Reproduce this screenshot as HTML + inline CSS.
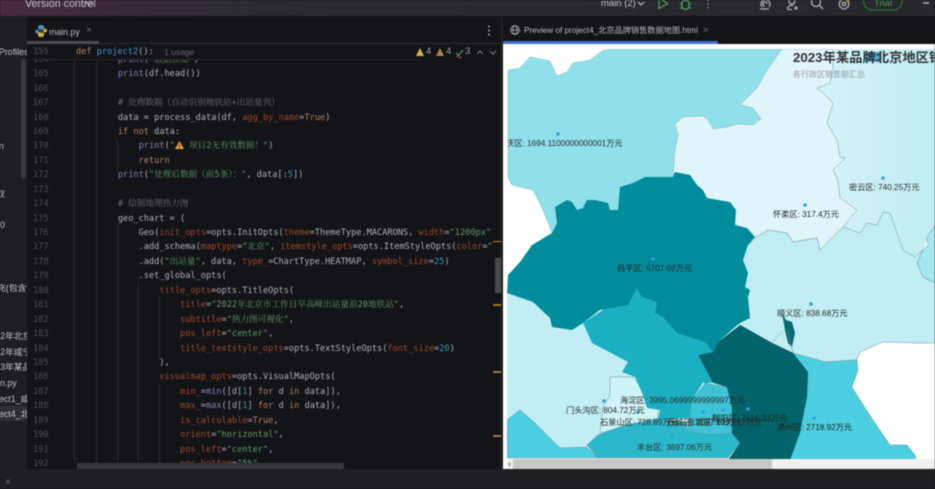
<!DOCTYPE html>
<html><head><meta charset="utf-8">
<style>
html,body{margin:0;padding:0;background:#131417;}
#w{position:relative;width:935px;height:489px;overflow:hidden;background:#131417;filter:blur(.4px);font-family:"Liberation Sans","Noto Sans CJK SC",sans-serif;}
.a{position:absolute;white-space:nowrap;}
pre{margin:0;font-family:"DejaVu Sans Mono","Noto Serif CJK SC",monospace;font-size:8.62px;line-height:14.44px;position:absolute;white-space:pre;}
.k{color:#b5805f}.s{color:#5f9a68}.p{color:#9c4a2b}.b{color:#7f83b8}.c{color:#6c7076}.n{color:#2a9aa6}.f{color:#4f8fd0}
#code{left:66px;top:52.8px;color:#aeb0b6;width:427px;height:411px;overflow:hidden;}
#nums{left:33px;top:52.8px;color:#4a4e55;}
.l{position:absolute;font-size:8.2px;color:#2a2a2a;line-height:12px;white-space:nowrap;}
.g{position:absolute;width:1px;background:#2a2c30;}
</style></head><body>
<div id="w">
<!-- top bar -->
<div class="a" style="left:0;top:0;width:935px;height:16px;background:linear-gradient(90deg,#4a2a40 0,#3a2a3a 90px,#2b2c31 260px,#26282c 100%);"></div>
<div class="a" style="left:25px;top:-2px;font-size:10.700px;color:#c4c4c8;line-height:12px;">Version control</div>
<div class="a" style="left:601px;top:-2px;font-size:9.500px;color:#c4c4c8;line-height:12px;">main (2)</div>
<svg class="a" style="left:0;top:0" width="660" height="16" fill="none" stroke="#c4c4c8" stroke-width="1.100"><path d="M86 2l3 3 3-3M638 2l3 3 3-3"/></svg>
<svg class="a" style="left:655px;top:0" width="280" height="16" fill="none" stroke-width="1.300">
<path d="M4 0V8.500L12.500 3.500L7 0" stroke="#4f9c57"/>
<path d="M27 2.500a4 4 0 0 1 7 0V6a3.500 3.500 0 0 1-7 0ZM25 4h2M34 4h2M25 8h2M34 8h2" stroke="#4f9c57"/>
<path d="M53 0v1M53 3.500v1M53 7v1" stroke="#b8bac0"/>
<path d="M110 6a2 2 0 1 1 2-2M107 7a4.500 4.500 0 1 1 7 0M105 9h9" stroke="#aeb0b5"/>
<circle cx="137" cy="1" r="3" stroke="#aeb0b5"/>
<path d="M132.500 9.500a4.500 4 0 0 1 6-4M133 9.500h4M141 6v4M139 8h4" stroke="#aeb0b5"/>
<circle cx="161" cy="2" r="4.500" stroke="#aeb0b5"/><path d="M164.500 5.500l3.500 3.500" stroke="#aeb0b5"/>
<path d="M185 1l3-2h2l3 2 1 3-1 3-3 2h-2l-3-2-1-3Z" stroke="#aeb0b5"/><circle cx="189" cy="4" r="1.800" stroke="#aeb0b5"/>
<circle cx="193" cy="1" r="1.500" fill="#c7a03a" stroke="none"/>
<rect x="208.500" y="-8" width="38.500" height="18" rx="9" stroke="#2f6b36"/>
<path d="M268 3h6" stroke="#c0c0c4"/>
</svg>
<div class="a" style="left:864px;top:-2px;width:38px;text-align:center;font-size:9.500px;color:#4f9c57;line-height:12px;">Trial</div>
<!-- sidebar -->
<div class="a" style="left:0;top:16px;width:27px;height:453px;background:#1d1e21;overflow:hidden;font-size:8.800px;color:#c2c3c7;line-height:12px;">
<div class="a" style="left:0;top:390px;width:27px;height:15px;background:#2e3034;"></div>
<div class="a" style="left:21px;top:43px;width:5px;height:119px;background:#38393c;"></div>
<div class="a" style="left:-1px;top:30px;">Profiles</div>
<div class="a" style="left:-1px;top:124px;">n</div>
<div class="a" style="left:-4px;top:172px;">取</div>
<div class="a" style="left:0;top:203px;">0</div>
<div class="a" style="left:-3px;top:266px;">充(包含%</div>
<div class="a" style="left:-4.800px;top:314px;">22年北京</div>
<div class="a" style="left:-4.800px;top:330px;">22年咸宁</div>
<div class="a" style="left:-4.800px;top:345px;">23年某品</div>
<div class="a" style="left:0;top:361px;">n.py</div>
<div class="a" style="left:-1px;top:377px;">ect1_咸</div>
<div class="a" style="left:-1px;top:392px;">ect4_北</div>
</div>
<!-- editor tab -->
<svg class="a" style="left:35px;top:25px" width="12" height="12"><path d="M6 0C3 0 3 1.500 3 3v1h3.500v.7H2C.5 4.700 0 5.500 0 6.500S.5 8.500 2 8.500h1V7c0-1 1-1.800 2-1.800h2.500c1 0 1.500-.7 1.500-1.500V2C9 .8 8 0 6 0Z" fill="#4d8ec4"/><path d="M6 12c3 0 3-1.500 3-3V8H5.500v-.7H10c1.500 0 2-.8 2-1.800S11.500 3.500 10 3.500H9V5c0 1-1 1.800-2 1.800H4.500C3.500 6.800 3 7.500 3 8.300V10c0 1.200 1 2 3 2Z" fill="#d8b23e"/></svg>
<div class="a" style="left:49px;top:25px;font-size:8.800px;color:#bdbec2;line-height:14px;">main.py</div>
<div class="a" style="left:86px;top:24px;font-size:10px;color:#6b6d72;line-height:14px;">×</div>
<div class="a" style="left:27px;top:43px;width:475px;height:1px;background:#2a2b2f;"></div>
<div class="a" style="left:27px;top:41px;width:72px;height:3px;background:#4b4d52;"></div>
<svg class="a" style="left:487px;top:25px" width="4" height="11"><circle cx="2" cy="1.500" r="1" fill="#a8aaaf"/><circle cx="2" cy="5.500" r="1" fill="#a8aaaf"/><circle cx="2" cy="9.500" r="1" fill="#a8aaaf"/></svg>
<!-- guides -->
<div class="g" style="left:74px;top:59px;height:404px;"></div>
<div class="g" style="left:96px;top:59px;height:404px;"></div>
<div class="g" style="left:117px;top:139px;height:32px;"></div>
<div class="g" style="left:117px;top:224px;height:239px;"></div>
<div class="g" style="left:138px;top:282px;height:181px;"></div>
<div class="g" style="left:159px;top:296px;height:64px;"></div>
<div class="g" style="left:159px;top:384px;height:79px;"></div>
<!-- numbers -->
<pre id="nums">164
165
166
167
168
169
170
171
172
173
174
175
176
177
178
179
180
181
182
183
184
185
186
187
188
189
190
191
192</pre>
<!-- code -->
<pre id="code">          <span class="b">print</span>(<span class="s">"数据预览"</span>)
          <span class="b">print</span>(df.head())

          <span class="c"># 处理数据（自动识别地铁站+出站量列）</span>
          data = process_data(df, <span class="p">agg_by_name</span>=<span class="k">True</span>)
          <span class="k">if not</span> data:
              <span class="b">print</span>(<span class="s">"</span><svg width="9" height="8" style="vertical-align:-1px"><path d="M4.500 0L9 8H0Z" fill="#e0a030"/><path d="M4.500 3v2.500M4.500 6.300v.8" stroke="#222" stroke-width=".8"/></svg><span class="s"> 项目2无有效数据！"</span>)
              <span class="k">return</span>
          <span class="b">print</span>(<span class="s">"处理后数据（前5条）："</span>, data[:<span class="n">5</span>])

          <span class="c"># 绘制地理热力图</span>
          geo_chart = (
              Geo(<span class="p">init_opts</span>=opts.InitOpts(<span class="p">theme</span>=ThemeType.MACARONS, <span class="p">width</span>=<span class="s">"1200px"</span>,
              .add_schema(<span class="p">maptype</span>=<span class="s">"北京"</span>, <span class="p">itemstyle_opts</span>=opts.ItemStyleOpts(<span class="p">color</span>=<span class="s">"#</span>
              .add(<span class="s">"出站量"</span>, data, <span class="p">type_</span>=ChartType.HEATMAP, <span class="p">symbol_size</span>=<span class="n">25</span>)
              .set_global_opts(
                  <span class="p">title_opts</span>=opts.TitleOpts(
                      <span class="p">title</span>=<span class="s">"2022年北京市工作日早高峰出站量前20地铁站"</span>,
                      <span class="p">subtitle</span>=<span class="s">"热力图可视化"</span>,
                      <span class="p">pos_left</span>=<span class="s">"center"</span>,
                      <span class="p">title_textstyle_opts</span>=opts.TextStyleOpts(<span class="p">font_size</span>=<span class="n">20</span>)
                  ),
                  <span class="p">visualmap_opts</span>=opts.VisualMapOpts(
                      <span class="p">min_</span>=<span class="b">min</span>([d[<span class="n">1</span>] <span class="k">for</span> d <span class="k">in</span> data]),
                      <span class="p">max_</span>=<span class="b">max</span>([d[<span class="n">1</span>] <span class="k">for</span> d <span class="k">in</span> data]),
                      <span class="p">is_calculable</span>=<span class="k">True</span>,
                      <span class="p">orient</span>=<span class="s">"horizontal"</span>,
                      <span class="p">pos_left</span>=<span class="s">"center"</span>,
                      <span class="p">pos_bottom</span>=<span class="s">"5%"</span>,</pre>
<!-- sticky header -->
<div class="a" style="left:27px;top:44px;width:475px;height:15px;background:#131417;"></div>
<div class="a" style="left:27px;top:59px;width:395px;height:1px;background:#25262a;"></div>
<pre style="left:33px;top:44.500px;color:#4a4e55;">155</pre>
<pre style="left:76px;top:44.500px;color:#aeb0b6;"><span class="k">def</span> <span class="f">project2</span>():</pre>
<div class="a" style="left:164px;top:45px;font-size:8.500px;color:#666a70;line-height:14px;">1 usage</div>
<svg class="a" style="left:415px;top:47px" width="88" height="12" fill="none">
<path d="M5 1L9 9H1Z" fill="#d8b04a"/><path d="M25 1L29 9H21Z" fill="#a88a45"/>
<path d="M41 6l2.500 2.500L48 3" stroke="#4f9c57" stroke-width="1.200"/><path d="M41 10q1.500-1.500 3 0t3 0" stroke="#b04a4a"/>
<path d="M62 7l3-3 3 3M75 4l3 3 3-3" stroke="#7d7f85" stroke-width="1"/>
</svg>
<div class="a" style="left:426px;top:46px;font-size:9.500px;color:#a0a2a6;line-height:12px;">4</div>
<div class="a" style="left:446px;top:46px;font-size:9.500px;color:#a0a2a6;line-height:12px;">4</div>
<div class="a" style="left:465px;top:46px;font-size:9.500px;color:#a0a2a6;line-height:12px;">3</div>
<!-- editor scrollbars -->
<div class="a" style="left:495px;top:258px;width:6px;height:35px;background:#47494d;"></div>
<div class="a" style="left:493px;top:241px;width:9px;height:1px;background:#b88a3a;"></div>
<div class="a" style="left:493px;top:304px;width:9px;height:2px;background:#9a7636;"></div>
<div class="a" style="left:493px;top:371px;width:9px;height:2px;background:#9a7636;"></div>
<div class="a" style="left:493px;top:435px;width:9px;height:2px;background:#9a7636;"></div>
<div class="a" style="left:77px;top:463px;width:267px;height:6px;background:#36373a;"></div>
<!-- bottom -->
<div class="a" style="left:0;top:469px;width:935px;height:20px;background:#1e1f22;"></div>
<div class="a" style="left:5px;top:477px;font-size:10px;color:#6b6d72;line-height:12px;">×</div>
<!-- preview tab -->
<div class="a" style="left:501px;top:16px;width:1px;height:453px;background:#2a2b2f;"></div>
<svg class="a" style="left:510px;top:25px" width="10" height="10" fill="none" stroke="#b4b6ba" stroke-width=".8"><circle cx="5" cy="5" r="4.300"/><ellipse cx="5" cy="5" rx="2" ry="4.300"/><path d="M.7 5h8.600"/></svg>
<div class="a" style="left:524px;top:24px;font-size:8.200px;color:#b6b7bb;line-height:14px;">Preview of project4_北京品牌销售数据地图.html</div>
<div class="a" style="left:703px;top:24px;font-size:10px;color:#6b6d72;line-height:14px;">×</div>
<div class="a" style="left:503px;top:41px;width:215px;height:3px;background:#3a72cf;"></div>
<!-- map -->
<div class="a" style="left:503px;top:44px;width:432px;height:416px;background:#fff;overflow:hidden;">
<svg class="a" style="left:-503px;top:-44px" width="935" height="489" stroke="#6f8f96" stroke-width=".5" stroke-linejoin="round">
<defs><linearGradient id="my" x1="0" x2="1" y1="0" y2="0"><stop offset="0" stop-color="#d6f3f8"/><stop offset="1" stop-color="#bfedf3"/></linearGradient></defs>
<polygon fill="url(#my)" stroke="none" points="805,49 935,49 935,225 923,250 915,257 903,250 890,213 883,212 877,225 867,223 860,233 843,227 857,210 805,180"/>
<polygon fill="#e0f5f9" points="782,49 833,49 833,67 830,83 817,88 823,93 833,103 827,123 837,140 840,157 845,158 833,170 838,180 840,198 857,210 843,227 820,250 817,238 793,242 787,233 768,230 755,238 700,200 660,170 660,110 700,100"/>
<polygon fill="#c0eef4" points="755,238 768,230 787,233 793,242 817,238 820,250 843,227 860,233 867,223 877,225 883,212 890,213 903,250 915,257 923,250 917,263 923,277 935,283 935,343 917,343 883,342 860,352 857,360 825,362 793,353 772,343 740,325 700,300"/>
<polygon fill="#a4e6ee" points="935,225 927,237 928,245 923,250 917,263 923,277 935,283"/>
<polygon fill="#8fe0ea" stroke="#7fb5bf" points="508,70 520,68 530,57 550,61 557,76 567,72 573,63 590,60 602,51 610,49 782,49 767,70 757,88 740,105 753,108 761,119 753,125 737,124 727,127 713,129 708,120 703,116 683,117 675,124 678,135 675,150 673,177 645,190 600,230 552,233 543,210 533,190 512,185 508,178"/>
<polygon fill="#c0eef4" stroke="none" points="507,293 533,302 550,318 552,327 572,330 583,323 592,343 628,362 622,372 635,377 643,395 647,408 660,410 660,425 630,428 598,437 587,447 560,448 535,423 520,410 507,420"/>
<polygon fill="#d0f3f8" points="610,377 633,377 640,385 647,405 658,408 658,418 640,422 623,427 600,433 603,407 610,395"/>
<polygon fill="#1ab0c2" stroke="none" points="583,323 592,343 628,362 622,372 635,377 643,395 647,408 660,410 658,420 690,418 692,400 703,383 713,383 698,355 713,352 707,330 660,285 630,280 610,305"/>
<polygon fill="#2bb8ca" points="587,445 598,435 625,425 658,419 687,422 687,430 708,435 732,433 740,443 728,458 598,458"/>
<polygon fill="#4bcfe0" points="507,420 520,410 535,423 560,448 587,447 598,458 507,458"/>
<polygon fill="#4bcfe0" points="793,353 825,362 857,360 858,370 852,387 860,400 873,420 890,445 907,445 915,455 916,460 780,460 807,397 808,372"/>
<polygon fill="#3dc4d6" stroke="#5d9aa5" points="692,400 705,383 727,387 732,408 732,433 708,435 687,431 690,418"/>
<path d="M713,385V420L708,435M690,418H732" fill="none" stroke="#5d9aa5"/>
<polygon fill="#02636a" stroke="none" points="740,325 772,343 793,353 808,372 807,397 800,433 790,460 728,460 740,443 732,433 732,408 727,387 713,383 698,355 713,352 718,342"/>
<polygon fill="#018c9c" stroke="none" points="552,233 532,245 520,262 508,275 507,293 533,302 550,318 552,327 572,330 583,323 600,310 628,305 637,288 642,297 657,302 655,313 663,317 677,333 692,338 705,342 713,352 718,342 740,323 750,318 748,297 750,290 745,287 748,273 743,260 748,245 755,237 747,228 735,225 736,210 730,202 707,198 703,190 697,185 690,175 675,172 673,177 645,177 633,183 620,187 618,210 610,210 608,203 595,200 587,200 583,208 577,210 572,202 567,200 555,207 557,223"/>
<polygon fill="#0a6a70" stroke="none" points="782,313 786,320 792,322 795,333 792,347 788,343 785,330"/>
<path d="M771,343L783,331M788,331L793,353" fill="none"/>
<g fill="#2f9fe0" stroke="none">
<circle cx="558" cy="134" r="1.800"/><circle cx="805" cy="205" r="1.800"/><circle cx="883" cy="178" r="1.800"/><circle cx="653" cy="259" r="1.800"/><circle cx="811" cy="304" r="1.800"/><circle cx="604" cy="401" r="1.800"/><circle cx="638" cy="412" r="1.800"/><circle cx="703" cy="412" r="1.800"/><circle cx="723" cy="410" r="1.800"/><circle cx="748" cy="409" r="1.800"/><circle cx="814" cy="418" r="1.800"/><circle cx="672" cy="437" r="1.800"/><circle cx="682" cy="391" r="1.800"/>
</g>
<rect x="864" y="52" width="16" height="10" fill="#4aa8d8" stroke="none"/>
</svg>
<div class="l" style="left:5px;top:94px;width:200px;overflow:hidden;"><span style="margin-left:-10px;">延庆区: 1694.1100000000001万元</span></div>
<div class="l" style="left:270px;top:165px;">怀柔区: 317.4万元</div>
<div class="l" style="left:346px;top:138px;">密云区: 740.25万元</div>
<div class="l" style="left:114px;top:219px;">昌平区: 5707.08万元</div>
<div class="l" style="left:274px;top:264px;">顺义区: 838.68万元</div>
<div class="l" style="left:117px;top:351px;">海淀区: 3995.0699999999997万元</div>
<div class="l" style="left:63px;top:361px;">门头沟区: 804.72万元</div>
<div class="l" style="left:97px;top:373px;">石景山区: 728.89万元</div>
<div class="l" style="left:164px;top:373px;">西城区: 2097.61万元</div>
<div class="l" style="left:184px;top:373px;">东城区: 1993.17万元</div>
<div class="l" style="left:209px;top:369px;color:#222;">朝阳区: 7516.33万元</div>
<div class="l" style="left:274px;top:378px;color:#222;">通州区: 2718.92万元</div>
<div class="l" style="left:134px;top:398px;">丰台区: 3697.06万元</div>
<div class="a" style="left:290px;top:5px;font-size:13.300px;font-weight:bold;color:#333;line-height:18px;">2023年某品牌北京地区销售数据地图</div>
<div class="a" style="left:290px;top:25px;font-size:8px;color:#999;line-height:12px;">各行政区销售额汇总</div>
</div>
<div class="a" style="left:503px;top:44px;width:432px;height:5px;background:#fff;"></div>
<div class="a" style="left:503px;top:49px;width:4px;height:420px;background:#fff;"></div>
<!-- preview scrollbar -->
<div class="a" style="left:507px;top:459px;width:428px;height:10px;background:#f0f0f1;"></div>
<div class="a" style="left:513px;top:459px;width:259px;height:10px;background:#c6c6c6;"></div>
<svg class="a" style="left:506px;top:461px" width="6" height="7"><path d="M4.500 1L1.500 3.500L4.500 6Z" fill="#a4a4a4"/></svg>
</div>
</body></html>
